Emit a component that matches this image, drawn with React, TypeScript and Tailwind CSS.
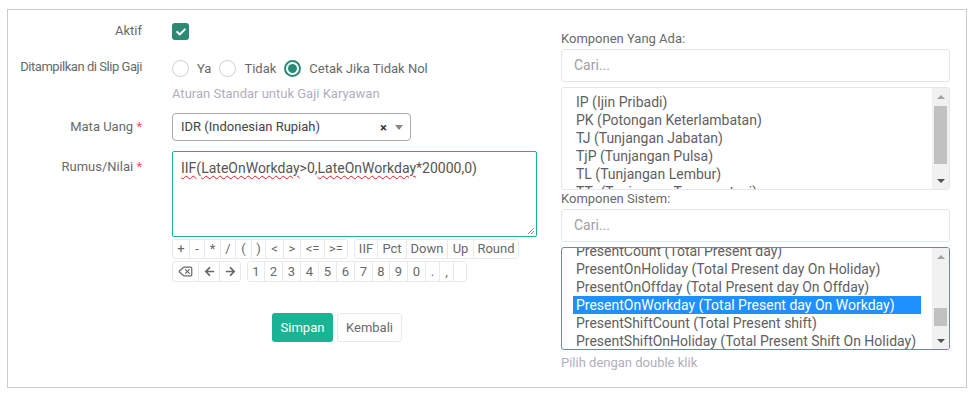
import { FaCheck, FaArrowLeft, FaArrowRight } from 'react-icons/fa';
import { Delete } from 'lucide-react';

const opsRow = [
  { t: '+', w: 'w-[17px]' },
  { t: '-', w: 'w-[15px]' },
  { t: '*', w: 'w-[16px]' },
  { t: '/', w: 'w-[15px]' },
  { t: '(', w: 'w-[16px]' },
  { t: ')', w: 'w-[14px]' },
  { t: '<', w: 'w-[18px]' },
  { t: '>', w: 'w-[17px]' },
  { t: '<=', w: 'w-[24px]' },
  { t: '>=', w: 'w-[22px]' },
];

const fnRow = [
  { t: 'IIF', w: 'w-[23px]' },
  { t: 'Pct', w: 'w-[29px]' },
  { t: 'Down', w: 'w-[41px]' },
  { t: 'Up', w: 'w-[26px]' },
  { t: 'Round', w: 'w-[44px]' },
];

const numRow = [
  { t: '1', w: 'w-[17px]' },
  { t: '2', w: 'w-[18px]' },
  { t: '3', w: 'w-[18px]' },
  { t: '4', w: 'w-[18px]' },
  { t: '5', w: 'w-[18px]' },
  { t: '6', w: 'w-[18px]' },
  { t: '7', w: 'w-[18px]' },
  { t: '8', w: 'w-[17px]' },
  { t: '9', w: 'w-[18px]' },
  { t: '0', w: 'w-[18px]' },
  { t: '.', w: 'w-[14px]' },
  { t: ',', w: 'w-[14px]' },
  { t: '', w: 'w-[12px]' },
];

const komponenAda = [
  'IP (Ijin Pribadi)',
  'PK (Potongan Keterlambatan)',
  'TJ (Tunjangan Jabatan)',
  'TjP (Tunjangan Pulsa)',
  'TL (Tunjangan Lembur)',
  'TTr (Tunjangan Transportasi)',
];

const komponenSistem = [
  'PresentCount (Total Present day)',
  'PresentOnHoliday (Total Present day On Holiday)',
  'PresentOnOffday (Total Present day On Offday)',
  'PresentOnWorkday (Total Present day On Workday)',
  'PresentShiftCount (Total Present shift)',
  'PresentShiftOnHoliday (Total Present Shift On Holiday)',
];

function BtnGroup({ items, h }: { items: { t: string; w: string }[]; h: string }) {
  return (
    <div className={`flex ${h} border border-[#e7eaec] rounded-[3px] divide-x divide-[#e7eaec] bg-white`}>
      {items.map((b, i) => (
        <div key={i} className={`${b.w} flex items-center justify-center text-[13px] text-[#676a6c]`}>
          {b.t}
        </div>
      ))}
    </div>
  );
}

function Scrollbar({ thumb }: { thumb: string }) {
  return (
    <div className="w-[17px] shrink-0 bg-[#f1f1f1] flex flex-col items-center">
      <div className="h-[17px] flex items-center justify-center">
        <div className="w-0 h-0 border-l-[4px] border-r-[4px] border-b-[4px] border-l-transparent border-r-transparent border-b-[#a3a3a3]" />
      </div>
      <div className="flex-1 w-full px-[2px]">
        <div className={`${thumb} w-full bg-[#c1c1c1]`} />
      </div>
      <div className="h-[17px] flex items-center justify-center">
        <div className="w-0 h-0 border-l-[4px] border-r-[4px] border-t-[4px] border-l-transparent border-r-transparent border-t-[#505050]" />
      </div>
    </div>
  );
}

function Radio({ checked, label }: { checked?: boolean; label: string }) {
  return (
    <div className="flex items-center gap-[8px] mr-[8px]">
      {checked ? (
        <div className="w-[17px] h-[17px] rounded-full border-[2px] border-[#2b8a74] flex items-center justify-center bg-white">
          <div className="w-[9px] h-[9px] rounded-full bg-[#2b8a74]" />
        </div>
      ) : (
        <div className="w-[17px] h-[17px] rounded-full border border-[#cfcfcf] bg-white" />
      )}
      <span className="text-[13px] text-[#676a6c]">{label}</span>
    </div>
  );
}

export default function App() {
  return (
    <div className="w-[979px] h-[397px] bg-white pt-[9px] pl-[7px] font-['Roboto',sans-serif] text-[#676a6c]">
      <div className="w-[960px] h-[379px] border border-[#cccccc] flex">
        {/* left column */}
        <div className="w-[546px] flex flex-col pt-[13px]">
          <div className="flex h-[17px] items-center">
            <div className="w-[134px] text-right text-[13px] -mt-[2px]">Aktif</div>
            <div className="ml-[30px] w-[17px] h-[17px] rounded-[3px] bg-[#2b8a74] flex items-center justify-center">
              <FaCheck className="text-white" size={10} />
            </div>
          </div>

          <div className="flex h-[17px] items-center mt-[20px]">
            <div className="w-[134px] text-right text-[13px] tracking-[-0.45px] -mt-[3px]">Ditampilkan di Slip Gaji</div>
            <div className="ml-[30px] flex items-center">
              <Radio label="Ya" />
              <Radio label="Tidak" />
              <Radio checked label="Cetak Jika Tidak Nol" />
            </div>
          </div>

          <div className="ml-[164px] mt-[8px] h-[18px] leading-[18px] text-[13px] text-[#b2aec0]">
            Aturan Standar untuk Gaji Karyawan
          </div>

          <div className="flex mt-[10px] items-center">
            <div className="w-[134px] text-right text-[13px]">
              Mata Uang <span className="text-[#ed5565]">*</span>
            </div>
            <div className="ml-[30px] w-[239px] h-[28px] border border-[#aaaaaa] rounded-[4px] flex items-center pl-[8px] pr-[7px]">
              <span className="flex-1 text-[13px] text-[#444]">IDR (Indonesian Rupiah)</span>
              <span className="text-[13px] font-bold text-[#333] mr-[8px] leading-none">×</span>
              <div className="w-0 h-0 border-l-[4px] border-r-[4px] border-t-[5px] border-l-transparent border-r-transparent border-t-[#888]" />
            </div>
          </div>

          <div className="flex mt-[10px]">
            <div className="w-[134px] text-right text-[13px] pt-[6px]">
              Rumus/Nilai <span className="text-[#ed5565]">*</span>
            </div>
            <div className="ml-[30px] flex flex-col">
              <div className="relative w-[365px] h-[86px] border border-[#1ab394] rounded-[2px] px-[8px] pt-[6px] text-[14px] text-[#555]">
                <span className="underline decoration-wavy decoration-[#e02020] decoration-1 underline-offset-2">IIF</span>(
                <span className="underline decoration-wavy decoration-[#e02020] decoration-1 underline-offset-2">LateOnWorkday</span>&gt;0,
                <span className="underline decoration-wavy decoration-[#e02020] decoration-1 underline-offset-2">LateOnWorkday</span>*20000,0)
                <svg className="absolute right-[1px] bottom-[1px]" width="8" height="8" viewBox="0 0 8 8">
                  <path d="M7 1L1 7M7 4L4 7" stroke="#888" strokeWidth="1" />
                </svg>
              </div>
              <div className="flex mt-[2px] gap-[6px]">
                <BtnGroup items={opsRow} h="h-[20px]" />
                <BtnGroup items={fnRow} h="h-[20px]" />
              </div>
              <div className="flex mt-[2px] gap-[6px]">
                <div className="flex h-[21px] border border-[#e7eaec] rounded-[3px] divide-x divide-[#e7eaec] bg-white">
                  <div className="w-[26px] flex items-center justify-center">
                    <Delete size={15} strokeWidth={2} className="text-[#676a6c]" />
                  </div>
                  <div className="w-[21px] flex items-center justify-center">
                    <FaArrowLeft size={11} className="text-[#676a6c]" />
                  </div>
                  <div className="w-[20px] flex items-center justify-center">
                    <FaArrowRight size={11} className="text-[#676a6c]" />
                  </div>
                </div>
                <BtnGroup items={numRow} h="h-[21px]" />
              </div>
            </div>
          </div>

          <div className="flex gap-[4px] ml-[264px] mt-[31px]">
            <button className="w-[61px] h-[29px] rounded-[3px] bg-[#1ab394] text-white text-[13px]">Simpan</button>
            <button className="w-[65px] h-[29px] rounded-[3px] bg-white border border-[#e7eaec] text-[#676a6c] text-[13px]">
              Kembali
            </button>
          </div>
        </div>

        {/* right column */}
        <div className="ml-[7px] w-[389px] flex flex-col pt-[20px]">
          <div className="text-[13px] h-[18px] leading-[18px]">Komponen Yang Ada:</div>
          <div className="mt-[1px] h-[33px] border border-[#e5e6e7] rounded-[3px] flex items-center pl-[12px] text-[14px] text-[#a0a0a0]">
            Cari...
          </div>
          <div className="mt-[5px] h-[103px] border border-[#e5e6e7] rounded-[3px] flex overflow-hidden">
            <div className="flex-1 overflow-hidden pl-[14px] pt-[5px] text-[14px] text-[#5f6062]">
              {komponenAda.map((k) => (
                <div key={k} className="h-[18px] leading-[18px] whitespace-nowrap">{k}</div>
              ))}
            </div>
            <Scrollbar thumb="h-[58px] mt-[1px]" />
          </div>

          <div className="text-[13px] h-[18px] leading-[18px]">Komponen Sistem:</div>
          <div className="mt-[1px] h-[33px] border border-[#e5e6e7] rounded-[3px] flex items-center pl-[12px] text-[14px] text-[#a0a0a0]">
            Cari...
          </div>
          <div className="mt-[5px] h-[103px] border border-[#1ab394] rounded-[3px] flex overflow-hidden">
            <div className="flex-1 overflow-hidden pl-[11px] pr-[11px]">
              <div className="-mt-[6px] text-[14px] text-[#5f6062]">
                {komponenSistem.map((k) => (
                  <div
                    key={k}
                    className={`h-[18px] leading-[18px] pl-[3px] whitespace-nowrap ${
                      k.startsWith('PresentOnWorkday') ? 'bg-[#1e90ff] text-white' : ''
                    }`}
                  >
                    {k}
                  </div>
                ))}
              </div>
            </div>
            <Scrollbar thumb="h-[18px] mt-[43px]" />
          </div>
          <div className="mt-[4px] text-[13px] h-[18px] leading-[18px] text-[#b2aec0]">Pilih dengan double klik</div>
        </div>
      </div>
    </div>
  );
}
